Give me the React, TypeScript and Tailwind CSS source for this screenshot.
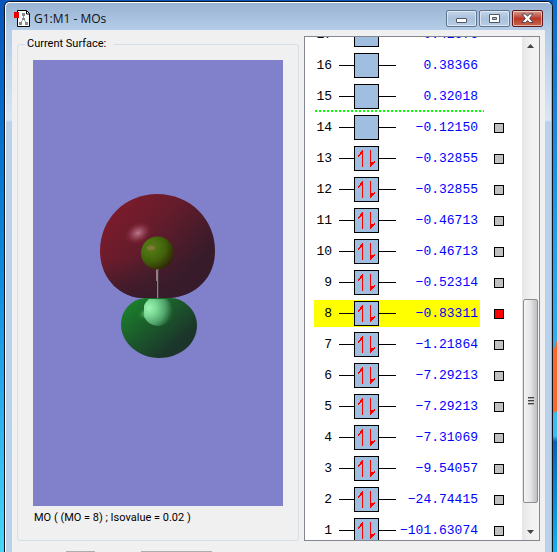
import React, { useState } from 'react';

interface Orbital {
  id: number;
  energy: string;
  occupied: boolean;
}

const orbitals: Orbital[] = [
  { id: 17, energy: '0.41676', occupied: false },
  { id: 16, energy: '0.38366', occupied: false },
  { id: 15, energy: '0.32018', occupied: false },
  { id: 14, energy: '−0.12150', occupied: false },
  { id: 13, energy: '−0.32855', occupied: true },
  { id: 12, energy: '−0.32855', occupied: true },
  { id: 11, energy: '−0.46713', occupied: true },
  { id: 10, energy: '−0.46713', occupied: true },
  { id: 9, energy: '−0.52314', occupied: true },
  { id: 8, energy: '−0.83311', occupied: true },
  { id: 7, energy: '−1.21864', occupied: true },
  { id: 6, energy: '−7.29213', occupied: true },
  { id: 5, energy: '−7.29213', occupied: true },
  { id: 4, energy: '−7.31069', occupied: true },
  { id: 3, energy: '−9.54057', occupied: true },
  { id: 2, energy: '−24.74415', occupied: true },
  { id: 1, energy: '−101.63074', occupied: true },
];

function DocumentIcon() {
  return (
    <svg width="16" height="17" viewBox="0 0 16 17" aria-hidden="true">
      <path d="M3.5 .5h9l3 3v13h-12z" fill="#fff" stroke="#000" />
      <path d="M12.500 1v3h3" fill="none" stroke="#000" />
      <path d="M9.5 4v6M9.5 9l-3 4M9.5 9l3 4" fill="none" stroke="#999" />
      <path d="M8 3h3v3H8zM8 8h3v2H8zM5 12h3v3H5zM11 12h3v3h-3z" fill="#888" />
      <path d="M0 2h5v6H0z" fill="#e80000" />
    </svg>
  );
}

function TitleBar() {
  const button =
    'h-[17px] w-[31px] rounded-[2px] border shadow-[inset_0_0_0_1px_rgba(255,255,255,.5)] flex items-center justify-center';
  const plain = 'border-[#60758c] bg-linear-to-b from-[#c3d5e9] via-[#a9c1dc] to-[#b8cde5]';
  return (
    <header className="h-[27px] shrink-0 flex items-center pl-[8px] pr-[8px] pt-[4px]">
      <DocumentIcon />
      <h1 className="ml-1 flex-1 font-['Open_Sans','Noto_Sans',sans-serif] text-[12px] leading-4 text-[#101018]">G1:M1 - MOs</h1>
      <div className="flex gap-[2px]">
        <button aria-label="Minimize" className={`${button} ${plain}`}>
          <span className="mt-1 h-[5px] w-[11px] rounded-[1px] border border-[#4f5966] bg-white" />
        </button>
        <button aria-label="Maximize" className={`${button} ${plain}`}>
          <svg width="11" height="9" viewBox="0 0 11 9">
            <path d="M.5.5h10v8H.5z" fill="#fff" stroke="#4f5966" />
            <path d="M3.5 3.5h4v2h-4z" fill="#a9c1dc" stroke="#4f5966" />
          </svg>
        </button>
        <button aria-label="Close" className={`${button} border-[#5c1c1c] bg-linear-to-b from-[#d79a91] via-[#b93724] to-[#c8654e]`}>
          <svg width="13" height="11" viewBox="0 0 13 11">
            <path d="M1 1h3.5l2 2.3 2-2.3H12L8.6 5.500l3.6 4H8.7L6.5 7.500l-2 2H.8l3.600-4z" fill="#fff" stroke="#504a56" />
          </svg>
        </button>
      </div>
    </header>
  );
}

function Surface() {
  const upperLobe = 'M157 194C190 194 215 219 215 251C215 281 191 298 167 298H143C121 298 100 279 100 251C100 219 125 194 157 194Z';
  const lowerLobe = 'M147 298H171C183 298 197 310 197 325C197 345 179 358 159 358C138 358 121 342 121 325C121 308 134 298 147 298Z';
  return (
    <svg className="mt-2 w-full flex-1 min-h-0 bg-[#8180cb]" viewBox="33 60 250 446" role="img" aria-label="Molecular orbital surface">
      <defs>
        <linearGradient id="red" x1=".12" y1=".15" x2=".8" y2=".7">
          <stop offset="0" stopColor="#7c1b2b" />
          <stop offset=".45" stopColor="#641c2b" />
          <stop offset="1" stopColor="#381b2a" />
        </linearGradient>
        <linearGradient id="redShade" x1=".45" y1="0" x2=".55" y2="1">
          <stop offset=".6" stopColor="#381b2a" stopOpacity="0" />
          <stop offset=".95" stopColor="#381b2a" stopOpacity=".8" />
        </linearGradient>
        <linearGradient id="green" x1=".1" y1=".15" x2=".75" y2=".75">
          <stop offset="0" stopColor="#1b7c2b" />
          <stop offset=".5" stopColor="#1b582b" />
          <stop offset="1" stopColor="#1b352a" />
        </linearGradient>
        <radialGradient id="atom" cx=".3" cy=".32" r=".75">
          <stop offset="0" stopColor="#65701c" />
          <stop offset=".25" stopColor="#4d7511" />
          <stop offset=".6" stopColor="#40600a" />
          <stop offset="1" stopColor="#302506" />
        </radialGradient>
        <radialGradient id="redGlow">
          <stop offset="0" stopColor="#bb788c" />
          <stop offset=".4" stopColor="#9e5063" stopOpacity=".75" />
          <stop offset="1" stopColor="#7c1b2b" stopOpacity="0" />
        </radialGradient>
        <radialGradient id="greenGlow">
          <stop offset="0" stopColor="#7bd88a" />
          <stop offset="1" stopColor="#1b7c2b" stopOpacity="0" />
        </radialGradient>
        <radialGradient id="hydrogen" gradientUnits="userSpaceOnUse" cx="149" cy="308" r="27">
          <stop offset="0" stopColor="#a0f4b4" />
          <stop offset=".3" stopColor="#78d894" />
          <stop offset=".6" stopColor="#51a36b" />
          <stop offset=".85" stopColor="#1f602f" />
          <stop offset="1" stopColor="#1b502b" />
        </radialGradient>
        <clipPath id="lowerClip">
          <path d="M144 299h30v30h-30z" />
        </clipPath>
      </defs>
      <path d={upperLobe} fill="url(#red)" />
      <path d={upperLobe} fill="url(#redShade)" />
      <ellipse cx="138" cy="233" rx="15" ry="11" fill="url(#redGlow)" transform="rotate(-28 138 233)" />
      <path d="M156 268h3v31h-2v-18h-1z" fill="#9c7b80" />
      <path d="M158 270h1v28h-1z" fill="#493740" />
      <circle cx="157.500" cy="253" r="16.500" fill="url(#atom)" />
      <ellipse cx="151" cy="248" rx="4" ry="2.500" fill="#a28252" opacity=".5" />
      <path d={lowerLobe} fill="url(#green)" />
      <ellipse cx="146" cy="313" rx="9" ry="6" fill="url(#greenGlow)" transform="rotate(-30 146 313)" />
      <circle cx="158" cy="311" r="15" fill="url(#hydrogen)" clipPath="url(#lowerClip)" />
    </svg>
  );
}

function OrbitalRow({ orbital, selected, onSelect }: { orbital: Orbital; selected: boolean; onSelect: () => void }) {
  return (
    <li className="h-[31px] flex items-center pl-[9px]">
      <div
        className={`relative h-[27px] w-[166px] flex items-center font-['Liberation_Mono',monospace] text-[13px] leading-4 ${selected ? 'bg-[#ffff00]' : ''}`}
      >
        <span className="w-[18px] shrink-0 text-right text-black">{orbital.id}</span>
        <span className="ml-[7px] h-px w-[15px] shrink-0 bg-black" />
        <span className="size-[25px] border border-black bg-[#a0bedf] shrink-0">
          {orbital.occupied && (
            <svg width="23" height="23" viewBox="0 0 23 23" aria-hidden="true">
              <path d="M7 3h1v17h-1zM6 4h1v3h-1zM5 5h1v3h-1zM4 7h1v2h-1zM3 8h1v2h-1z" fill="#ff0000" />
              <path d="M15 3h1v17h-1zM16 15h1v4h-1zM17 15h1v3h-1zM18 15h1v2h-1zM19 14h1v2h-1z" fill="#ff0000" />
            </svg>
          )}
        </span>
        <span className="h-px w-[17px] shrink-0 bg-black" />
        <span className="-ml-2 flex-1 pr-[2px] text-right text-[#0000ff]">{orbital.energy}</span>
        {orbital.id === 15 && (
          <span className="absolute left-px -right-1 -bottom-[2px] h-[2px] bg-[repeating-linear-gradient(90deg,#00ff00_0_2px,transparent_2px_4px)]" />
        )}
      </div>
      {orbital.id < 15 && (
        <input
          type="checkbox"
          checked={selected}
          onChange={onSelect}
          aria-label={`Orbital ${orbital.id}`}
          className="ml-[14px] size-[10px] appearance-none border border-black bg-[#c0c0c0] checked:bg-[#ff0000]"
        />
      )}
    </li>
  );
}

function ScrollBar() {
  return (
    <div className="w-[17px] shrink-0 flex flex-col items-center bg-linear-to-r from-[#e6e6e6] via-[#f1f1f1] to-[#f3f3f3]">
      <button aria-label="Scroll up" className="h-[17px] w-full flex items-center justify-center">
        <svg width="7" height="4" viewBox="0 0 7 4"><path d="M3.500 0L7 4H0z" fill="#444" /></svg>
      </button>
      <div className="flex-[246_1_0%]" />
      <div className="flex-[203_1_0%] w-[15px] flex flex-col items-center justify-center gap-px rounded-[2px] border border-[#8d8d8f] bg-linear-to-r from-[#f5f5f5] via-[#e5e5e7] to-[#bfbfc3]">
        <span className="h-[2px] w-[6px] border-t border-[#444] bg-[#aaa]" />
        <span className="h-[2px] w-[6px] border-t border-[#444] bg-[#aaa]" />
        <span className="h-[2px] w-[6px] border-t border-[#444] bg-[#aaa]" />
      </div>
      <div className="h-5" />
      <button aria-label="Scroll down" className="h-[17px] w-full flex items-center justify-center">
        <svg width="7" height="4" viewBox="0 0 7 4"><path d="M3.500 4L7 0H0z" fill="#444" /></svg>
      </button>
    </div>
  );
}

export default function App() {
  const [selected, setSelected] = useState(8);

  return (
    <div className="h-screen overflow-hidden flex bg-[#0a58bc]">
      <div className="w-1 shrink-0 bg-linear-to-b from-[#0854bc] via-[#0b8be2] to-[#48d6f8]" />
      <div className="mt-px flex-1 min-w-0 flex flex-col rounded-t-[6px] border-x border-t border-[#101418] bg-[#b9d1ea]">
        <div className="flex-1 min-h-0 flex flex-col rounded-t-[5px] border-l border-t border-r border-l-white border-t-white border-r-[#5fd0ee] bg-[linear-gradient(#98b3d2,#b5cde8_28px,#d9e5f3_117px,#b9d1ea_119px)]">
          <TitleBar />
          <main className="flex-1 min-h-0 mx-[6px] flex flex-col bg-[#f0f0f0]">
            <div className="flex-1 min-h-0 flex gap-[5px] px-[5px] pt-[6px]">
              <fieldset className="flex-1 min-w-0 flex flex-col rounded-[3px] border border-[#d5dfe5] px-[15px] pb-[14px] font-['Roboto','Liberation_Sans',sans-serif] text-[11px] leading-4 text-black">
                <legend className="-ml-2 pl-[2px] pr-2">Current Surface:</legend>
                <Surface />
                <p className="mt-1 pl-px">MO ( (MO = 8) ; Isovalue = 0.02 )</p>
              </fieldset>
              <section className="w-[236px] shrink-0 flex overflow-hidden border border-[#828790] bg-white">
                <ul className="-mt-[18px] flex-1">
                  {orbitals.map((orbital) => (
                    <OrbitalRow
                      key={orbital.id}
                      orbital={orbital}
                      selected={orbital.id === selected}
                      onSelect={() => setSelected(orbital.id)}
                    />
                  ))}
                </ul>
                <ScrollBar />
              </section>
            </div>
            <div className="mt-[10px] ml-[54px] flex gap-[46px]">
              <span className="h-px w-[29px] bg-[#adadad]" />
              <span className="h-px w-[71px] bg-[#adadad]" />
            </div>
          </main>
        </div>
      </div>
      <svg className="w-1 h-full shrink-0" viewBox="0 0 4 552" preserveAspectRatio="none" aria-hidden="true">
        <defs>
          <linearGradient id="sky" x1="0" y1="0" x2="0" y2="1">
            <stop offset="0" stopColor="#0f6cc8" />
            <stop offset=".4" stopColor="#229ce4" />
            <stop offset=".79" stopColor="#40bdf0" />
            <stop offset=".8" stopColor="#0864b4" />
            <stop offset="1" stopColor="#10b4ec" />
          </linearGradient>
        </defs>
        <path d="M0 0h4v552H0z" fill="url(#sky)" />
        <path d="M4 340L0 352v61l4-2z" fill="#fa682c" />
      </svg>
    </div>
  );
}
